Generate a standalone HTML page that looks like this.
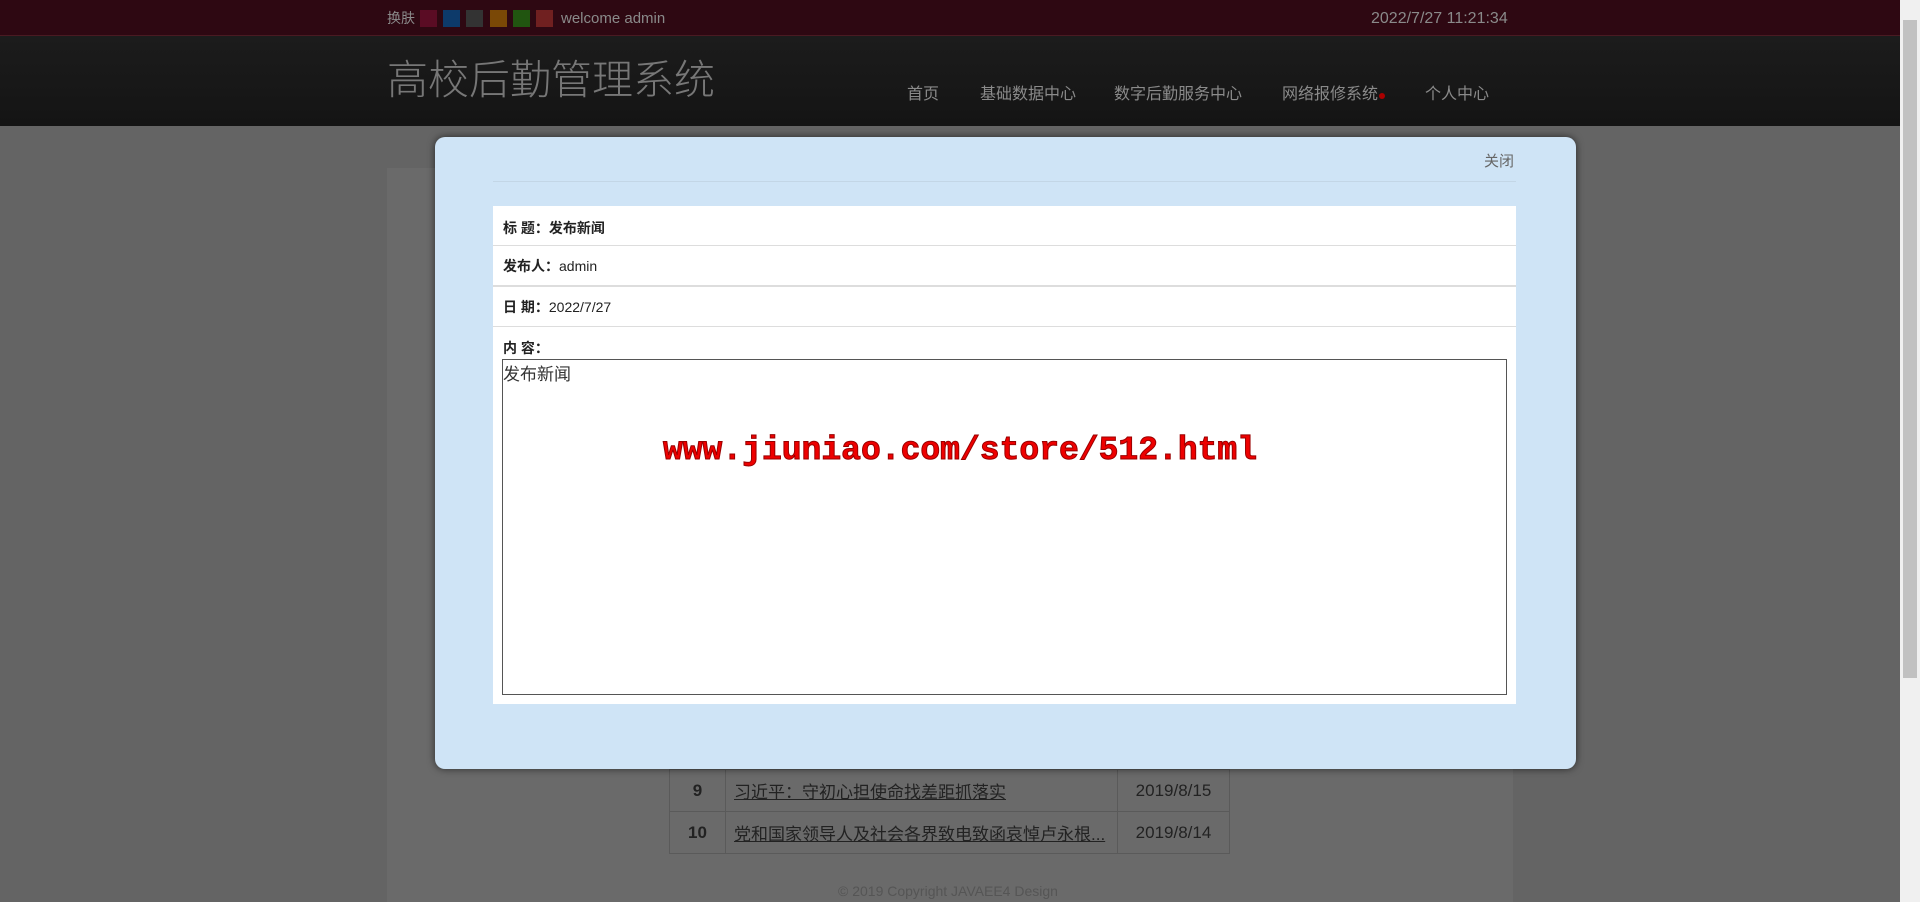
<!DOCTYPE html>
<html><head><meta charset="utf-8"><style>
*{margin:0;padding:0;box-sizing:border-box}
body{width:1920px;height:902px;overflow:hidden;background:#646464;font-family:"Liberation Sans","Noto Sans CJK SC",sans-serif;position:relative}
.top{position:absolute;left:0;top:0;width:1900px;height:36px;background:#2e0812;border-bottom:1px solid #4a1a22}
.top span{position:absolute;top:10px;font-size:15px;color:#8a8a8a}
.sq{position:absolute;top:10px;width:17px;height:17px}
.hdr{position:absolute;left:0;top:36px;width:1900px;height:90px;background:linear-gradient(#1c1c1c,#141414)}
.title{position:absolute;left:387px;top:46px;font-size:41px;color:#777;font-weight:300}
.nav{position:absolute;top:80px;font-size:16px;color:#8a8a8a}
.content{position:absolute;left:387px;top:168px;width:1126px;height:734px;background:#6a6a6a}
.modal{position:absolute;left:435px;top:137px;width:1141px;height:632px;background:#cfe4f6;border-radius:10px;box-shadow:0 0 8px rgba(0,0,0,.6)}
.close{position:absolute;left:1484px;top:150px;font-size:15px;color:#666}
.sep{position:absolute;left:493px;top:181px;width:1023px;height:1px;background:#c3d6e6}
.box{position:absolute;left:493px;top:206px;width:1023px;height:498px;background:#fff}
.row{position:absolute;left:10px;font-size:14px;color:#222}
.line{position:absolute;left:0;width:1023px;height:1px;background:#ddd}
.ta{position:absolute;left:9px;top:153px;width:1005px;height:336px;border:1px solid #555;font-size:17px;color:#333}
.wm{position:absolute;left:0;width:1920px;text-align:center;top:432px;font-family:"Liberation Mono",monospace;font-weight:bold;font-size:33px;color:#e00;-webkit-text-stroke:1px #900;text-shadow:1px 1px 0 #fff,-1px -1px 0 #fff}
table{position:absolute;left:669px;top:769px;border-collapse:collapse;font-size:17px;color:#222}
td{border:1px solid #5a5a5a;height:42px;padding:0 8px}
.sb{position:absolute;right:0;top:0;width:20px;height:902px;background:#f0f0f0}
.thumb{position:absolute;right:3px;top:20px;width:14px;height:658px;background:#c1c1c1}
</style></head><body>
<div class="top">
<span style="left:387px;font-size:14px;top:8px">换肤</span>
<div class="sq" style="left:420px;background:#5a0c24"></div>
<div class="sq" style="left:443px;background:#0d3a6a"></div>
<div class="sq" style="left:466px;background:#333"></div>
<div class="sq" style="left:490px;background:#7a4806"></div>
<div class="sq" style="left:513px;background:#215510"></div>
<div class="sq" style="left:536px;background:#702020"></div>
<span style="left:561px">welcome admin</span>
<span style="left:1371px;font-size:16px">2022/7/27 11:21:34</span>
</div>
<div class="hdr"></div>
<div class="title">高校后勤管理系统</div>
<div class="nav" style="left:907px">首页</div>
<div class="nav" style="left:980px">基础数据中心</div>
<div class="nav" style="left:1114px">数字后勤服务中心</div>
<div class="nav" style="left:1282px">网络报修系统<span style="display:inline-block;width:6px;height:6px;border-radius:3px;background:#a00;margin-left:1px"></span></div>
<div class="nav" style="left:1425px">个人中心</div>
<div class="content"></div>
<table>
<tr><td style="width:56px;text-align:center;font-weight:bold">9</td><td style="width:392px;text-decoration:underline">习近平：守初心担使命找差距抓落实</td><td style="width:112px;text-align:center">2019/8/15</td></tr>
<tr><td style="text-align:center;font-weight:bold">10</td><td style="text-decoration:underline">党和国家领导人及社会各界致电致函哀悼卢永根...</td><td style="text-align:center">2019/8/14</td></tr>
</table>
<div style="position:absolute;left:838px;top:883px;font-size:14px;color:#555">© 2019 Copyright JAVAEE4 Design</div>
<div class="modal"></div>
<div class="close">关闭</div>
<div class="sep"></div>
<div class="box">
<div class="row" style="top:12px"><b>标 题：发布新闻</b></div>
<div class="line" style="top:39px"></div>
<div class="row" style="top:50px"><b>发布人：</b>admin</div>
<div class="line" style="top:79px;height:2px"></div>
<div class="row" style="top:91px"><b>日 期：</b>2022/7/27</div>
<div class="line" style="top:120px"></div>
<div class="row" style="top:132px"><b>内 容：</b></div>
<div class="ta">发布新闻</div>
</div>
<div class="wm">www.jiuniao.com/store/512.html</div>
<div class="sb"><div class="thumb"></div></div>
</body></html>
